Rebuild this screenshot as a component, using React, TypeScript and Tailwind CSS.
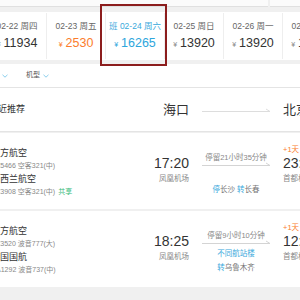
import React from "react";

const dates = [
  { d: "02-22 周四", p: "11934", c: "dark" },
  { d: "02-23 周五", p: "2530", c: "orange" },
  { d: "02-24 周六", p: "16265", c: "blue", ban: true },
  { d: "02-25 周日", p: "13920", c: "dark" },
  { d: "02-26 周一", p: "13920", c: "dark" },
  { d: "02-27 周二", p: "13920", c: "dark" },
];

function Chevron() {
  return (
    <svg width="6" height="4" viewBox="0 0 6 4" className="block">
      <path d="M0.5 0.8 L3 3.2 L5.5 0.8" fill="none" stroke="#7cc8ea" strokeWidth="0.9" />
    </svg>
  );
}

function ArrowLine({ color }: { color: string }) {
  return (
    <svg width="68" height="5" viewBox="0 0 68 5" className="block">
      <path d="M0 3.5 H68" stroke={color} strokeWidth="1" />
      <path d="M64 1 L68 3.5" stroke={color} strokeWidth="1" fill="none" />
    </svg>
  );
}

type Card = {
  lines: { name: string; info: string; share?: boolean }[];
  dep: string;
  arr: string;
  stay: string;
  note?: string;
  stops: React.ReactNode;
};

const cards: Card[] = [
  {
    lines: [
      { name: "南方航空", info: "CZ5466 空客321(中)" },
      { name: "新西兰航空", info: "NZ3908 空客321(中)", share: true },
    ],
    dep: "17:20",
    arr: "23:55",
    stay: "停留21小时35分钟",
    stops: (
      <>
        <span className="text-[#3aa9dc]">停</span>
        <span>长沙 </span>
        <span className="text-[#3aa9dc]">转</span>
        <span>长春</span>
      </>
    ),
  },
  {
    lines: [
      { name: "南方航空", info: "CZ3520 波音777(大)" },
      { name: "中国国航", info: "CA1292 波音737(中)" },
    ],
    dep: "18:25",
    arr: "12:45",
    stay: "停留9小时10分钟",
    note: "不同航站楼",
    stops: (
      <>
        <span className="text-[#3aa9dc]">转</span>
        <span>乌鲁木齐</span>
      </>
    ),
  },
];

export default function App() {
  return (
    <div className="relative w-[300px] h-[300px] overflow-hidden bg-[#f0f0f0] font-['Liberation_Sans','Noto_Sans_CJK_SC',sans-serif]">
      {/* top strip */}
      <div className="flex gap-[2px] h-[7px]">
        <div className="w-[268px] bg-[#fbfbfb] border-b border-[#e0e0e0]" />
        <div className="flex-1 bg-[#fbfbfb] border-b border-[#e0e0e0]" />
      </div>

      {/* date strip */}
      <div className="mt-[5px] h-[48px] bg-white overflow-hidden">
        <div className="flex -ml-[12px] w-[360px] py-[1px]">
          {dates.map((x) => {
            const col =
              x.c === "orange" ? "text-[#fb7d2c]" : x.c === "blue" ? "text-[#2ea6dc]" : "text-[#333333]";
            return (
              <div
                key={x.d}
                className="w-[59px] h-[46px] shrink-0 border-r border-[#eeeeee] flex flex-col items-center pt-[7px]"
              >
                <div className={`text-[8.5px] leading-[12px] whitespace-nowrap ${x.ban ? "text-[#3aa9dc]" : "text-[#666666]"}`}>
                  {x.ban ? "班 " : ""}
                  {x.d}
                </div>
                <div className={`mt-[3px] leading-[16px] whitespace-nowrap flex items-baseline ${col}`}>
                  <span className={`text-[7px] mr-[3px] ${x.c === "dark" ? "text-[#888888]" : ""}`}>¥</span>
                  <span className="text-[12.5px]">{x.p}</span>
                </div>
              </div>
            );
          })}
        </div>
      </div>

      {/* filter bar */}
      <div className="mt-[4px] h-[24px] bg-white border-b border-[#e4e4e4] flex items-center">
        <div className="ml-[2px]">
          <Chevron />
        </div>
        <span className="ml-[18px] text-[7px] text-[#555555]">机型</span>
        <div className="ml-[3px]">
          <Chevron />
        </div>
      </div>

      {/* header row */}
      <div className="h-[44px] bg-white border-b border-[#e4e4e4] flex items-center overflow-hidden">
        <div className="flex items-center -ml-[9px] w-[360px] shrink-0">
          <div className="w-[149px] shrink-0 text-[9px] text-[#333333] whitespace-nowrap">
            <span className="-ml-[2px]">就近推荐</span>
          </div>
          <div className="w-[49px] shrink-0 text-right text-[13px] leading-[18px] text-[#333333]">海口</div>
          <div className="ml-[13px] w-[68px] shrink-0 mt-[2px]">
            <ArrowLine color="#dddddd" />
          </div>
          <div className="ml-[13px] shrink-0 text-[13px] leading-[18px] text-[#333333] whitespace-nowrap">北京</div>
        </div>
      </div>

      {/* cards */}
      {cards.map((c, i) => (
        <div key={i} className={`${i === 0 ? "mt-[1px]" : "mt-[2px]"} h-[76px] bg-white overflow-hidden`}>
          <div className="flex -ml-[9px] w-[360px] h-full">
            <div className="w-[149px] shrink-0 pt-[13px] whitespace-nowrap">
              {c.lines.map((l) => (
                <div key={l.info}>
                  <div className="text-[9px] leading-[14px] text-[#333333]">{l.name}</div>
                  <div className="text-[7px] leading-[12px] text-[#888888]">
                    {l.info}
                    {l.share ? <span className="ml-[3px] text-[#36bb7a]">共享</span> : null}
                  </div>
                </div>
              ))}
            </div>
            <div className="w-[49px] shrink-0 pt-[22px] text-right">
              <div className="text-[14px] leading-[16px] text-[#333333]">{c.dep}</div>
              <div className="mt-[2px] text-[7.5px] leading-[12px] text-[#888888] whitespace-nowrap">凤凰机场</div>
            </div>
            <div className="ml-[13px] w-[68px] shrink-0 pt-[20px] flex flex-col items-center">
              <div className="text-[7.5px] leading-[10px] text-[#888888] whitespace-nowrap">{c.stay}</div>
              <div className="mt-[-1px]">
                <ArrowLine color="#d4d4d4" />
              </div>
              <div className="mt-[2px] h-[14px] text-[7.5px] leading-[14px] text-[#3aa9dc] whitespace-nowrap">
                {c.note ?? ""}
              </div>
              <div className="h-[14px] text-[7.5px] leading-[14px] text-[#777777] whitespace-nowrap">{c.stops}</div>
            </div>
            <div className="ml-[13px] shrink-0 pt-[12px] whitespace-nowrap">
              <div className="text-[7.5px] leading-[10px] text-[#fb7d2c]">+1天</div>
              <div className="text-[14px] leading-[16px] text-[#333333]">{c.arr}</div>
              <div className="mt-[2px] text-[7.5px] leading-[12px] text-[#888888]">首都机场</div>
            </div>
          </div>
        </div>
      ))}

      {/* annotation box around selected date */}
      <div className="absolute left-[100px] top-[4px] w-[67px] h-[62px] border-2 border-[#8c1d1d]" />
    </div>
  );
}
